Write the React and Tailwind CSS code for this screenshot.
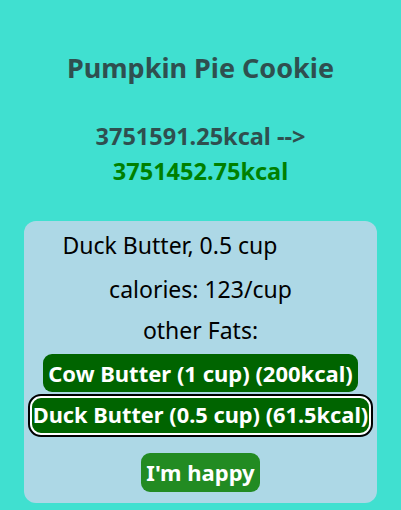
export default function App() {
  return (
    <div className="min-h-screen bg-[#40e0d0] font-['Noto_Sans',sans-serif] pt-[50px] px-[24px] pb-[8px]">
      <h2 className="text-center text-[27px] leading-[36px] font-bold text-[#2f4f4f]">
        Pumpkin Pie Cookie
      </h2>

      <div className="mt-[33px] text-center text-[23.5px] leading-[35px] font-bold">
        <div className="text-[#2f4f4f]">3751591.25kcal --&gt;</div>
        <div className="text-[#008000]">3751452.75kcal</div>
      </div>

      <div className="mt-[32px] rounded-[12px] bg-[#add8e6] pt-[10px] pb-[11px] flex flex-col items-center text-black">
        <div className="text-[23px] leading-[28px] pr-[61px]">Duck Butter, 0.5 cup</div>
        <div className="mt-[16px] text-[23px] leading-[28px]">calories: 123/cup</div>
        <div className="mt-[13px] text-[23px] leading-[28px]">other Fats:</div>
        <button className="mt-[10px] h-[38px] bg-[#006400] text-white font-bold text-[22px] px-[5px] rounded-[9px]">
          Cow Butter (1 cup) (200kcal)
        </button>
        <button className="mt-[4px] h-[39px] bg-[#006400] text-white font-bold text-[21.8px] px-[1px] rounded-[11px] border-2 border-white outline-2 outline-black">
          Duck Butter (0.5 cup) (61.5kcal)
        </button>
        <button className="mt-[18px] h-[39px] bg-[#228b22] text-white font-bold text-[22px] px-[5px] rounded-[9px]">
          I'm happy
        </button>
      </div>
    </div>
  );
}
